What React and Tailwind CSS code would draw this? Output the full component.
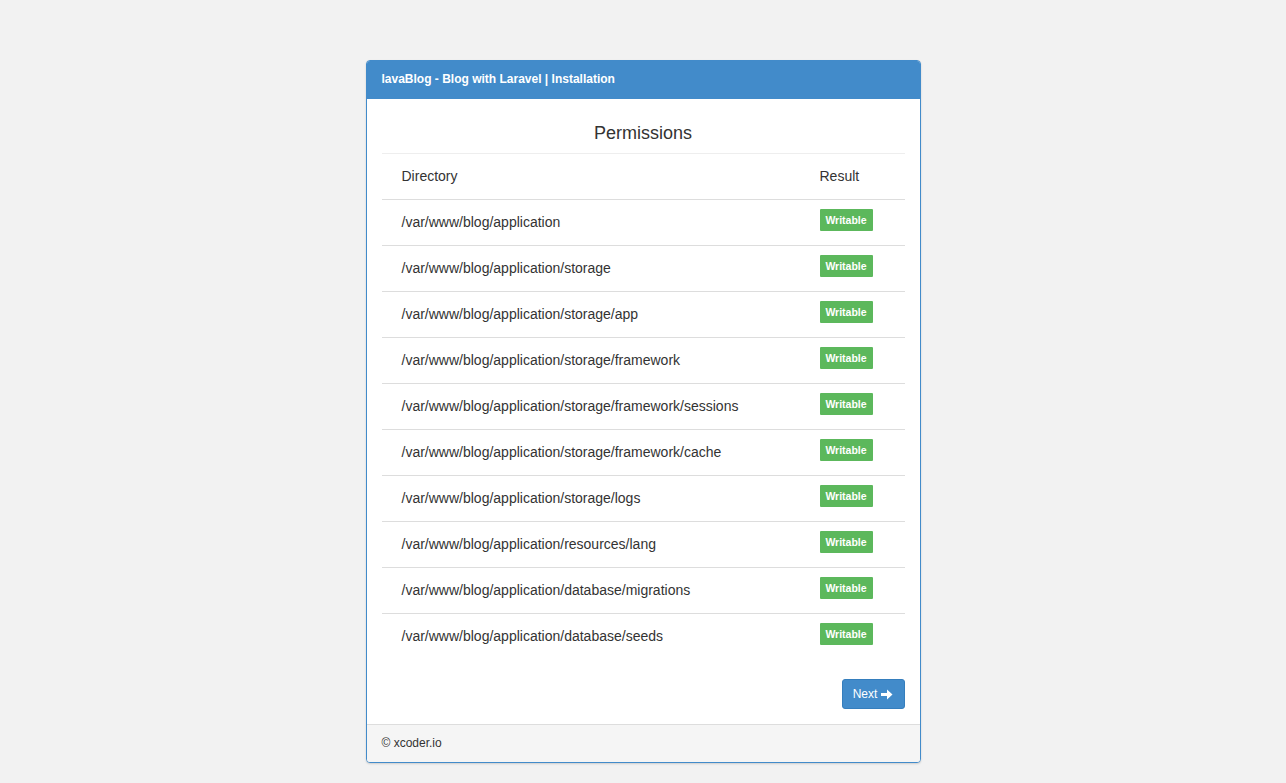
import React from "react";

const dirs = [
  "/var/www/blog/application",
  "/var/www/blog/application/storage",
  "/var/www/blog/application/storage/app",
  "/var/www/blog/application/storage/framework",
  "/var/www/blog/application/storage/framework/sessions",
  "/var/www/blog/application/storage/framework/cache",
  "/var/www/blog/application/storage/logs",
  "/var/www/blog/application/resources/lang",
  "/var/www/blog/application/database/migrations",
  "/var/www/blog/application/database/seeds",
];

function Arrow() {
  return (
    <svg width="12" height="11" viewBox="0 0 12 11" className="inline-block">
      <path d="M0 4 H6 V0.5 L11.5 5.5 L6 10.5 V7 H0 Z" fill="white" />
    </svg>
  );
}

export default function App() {
  return (
    <div
      className="min-h-[783px] bg-[#f2f2f2] pt-[60px] text-[#333]"
      style={{ fontFamily: '"Liberation Sans", Arial, sans-serif' }}
    >
      <div className="mx-auto w-[555px] rounded-[4px] border border-[#428bca] bg-white shadow-[0_1px_2px_rgba(0,0,0,0.15)] overflow-hidden">
        <div className="flex h-[38px] items-center bg-[#428bca] px-[15px] pb-[2px] text-[12px] font-bold text-white">
          lavaBlog - Blog with Laravel | Installation
        </div>
        <div className="px-[15px] pt-[15px] pb-[15px]">
          <div className="flex h-[40px] items-center justify-center border-b border-[#eee] text-[18px]">
            Permissions
          </div>
          <div className="grid h-[46px] grid-cols-[418px_1fr] items-center border-b border-[#ddd] text-[14px]">
            <div className="pl-[20px]">Directory</div>
            <div className="pl-[20px]">Result</div>
          </div>
          {dirs.map((d, i) => {
            const last = i === dirs.length - 1;
            return (
              <div
                key={d}
                className={
                  "grid grid-cols-[418px_1fr] text-[14px] " +
                  (last ? "h-[45px]" : "h-[46px] border-b border-[#ddd]")
                }
              >
                <div className="flex items-center pl-[20px]">{d}</div>
                <div className="pl-[20px] pt-[9px]">
                  <span className="flex h-[22px] w-[53px] items-center justify-center rounded-[1px] bg-[#5cb85c] pt-[1px] text-[10.5px] font-bold text-white">
                    Writable
                  </span>
                </div>
              </div>
            );
          })}
          <div className="mt-[20px] flex justify-end">
            <button className="flex h-[30px] w-[63px] items-center justify-center gap-[4px] rounded-[3px] border border-[#357ebd] bg-[#428bca] text-[12px] text-white">
              Next <Arrow />
            </button>
          </div>
        </div>
        <div className="flex h-[38px] items-center border-t border-[#ddd] bg-[#f5f5f5] px-[15px] pb-[2px] text-[12px]">
          © xcoder.io
        </div>
      </div>
    </div>
  );
}
